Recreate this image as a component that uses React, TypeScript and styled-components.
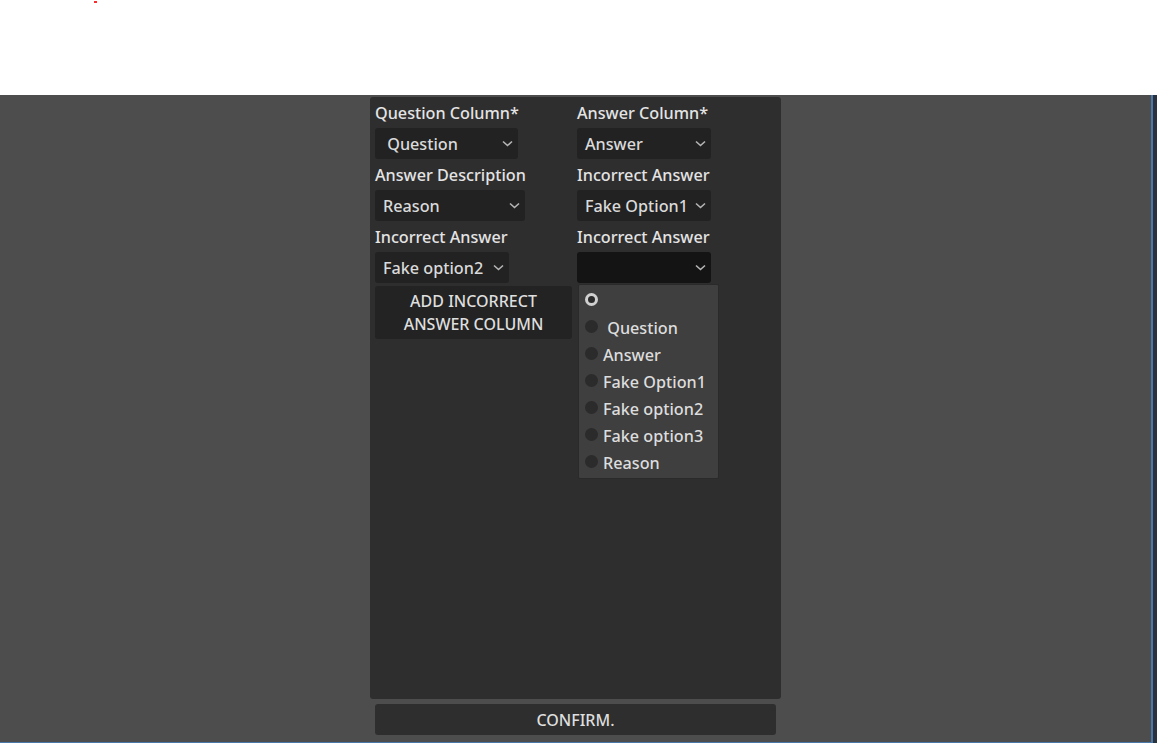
import React from 'react';
import styled, { createGlobalStyle } from 'styled-components';

const GlobalStyle = createGlobalStyle`
    html, body {
        margin: 0;
        padding: 0;
        background: #ffffff;
    }
    body {
        font-family: 'Noto Sans', 'Open Sans', sans-serif;
        width: 1157px;
        height: 743px;
        overflow: hidden;
    }
`;

const Page = styled.div`
    display: flex;
    flex-direction: column;
    width: 1157px;
    height: 743px;
`;

const Header = styled.div`
    position: relative;
    height: 95px;
    flex: none;
    background: #ffffff;
`;

// leftover cursor tick in the header strip
const RedTick = styled.span`
    position: absolute;
    left: 94px;
    top: 1px;
    width: 3px;
    height: 2px;
    background: #ff2a2a;
`;

const Stage = styled.div`
    flex: 1;
    display: flex;
    align-items: flex-start;
    background: #29323e;
`;

const Viewport = styled.div`
    width: 1151px;
    height: 645px;
    background: #4d4d4d;
    border-right: 2px solid #4a78a8;
    border-bottom: 2px solid #4a78a8;
    display: flex;
    flex-direction: column;
    align-items: center;
    padding-top: 2px;
    box-sizing: content-box;
`;

const Panel = styled.div`
    width: 411px;
    height: 602px;
    box-sizing: border-box;
    background: #2e2e2e;
    border-radius: 3px;
    padding: 4px 6px 0 5px;
`;

const Grid = styled.div`
    display: grid;
    grid-template-columns: 197px 197px;
    column-gap: 5px;
    row-gap: 4px;
`;

const Field = styled.div`
    position: relative;
    display: flex;
    flex-direction: column;
    align-items: flex-start;
    gap: 3px;
`;

const Label = styled.div`
    height: 24px;
    line-height: 24px;
    font-size: 16.2px;
    font-weight: 500;
    color: #e4e4e4;
    white-space: nowrap;
`;

const Select = styled.div<{ $w: number; $open?: boolean }>`
    width: ${(p) => p.$w}px;
    height: 31px;
    box-sizing: border-box;
    display: flex;
    align-items: center;
    justify-content: space-between;
    padding: 0 5px 0 8px;
    border-radius: 3px;
    background: ${(p) => (p.$open ? '#141414' : '#222222')};
    font-size: 16.2px;
    font-weight: 500;
    color: #dadada;
    white-space: pre;
`;

const Chevron = () => (
    <svg width="11" height="7" viewBox="0 0 11 7">
        <polyline points="1,1.5 5.5,5.5 10,1.5" fill="none" stroke="#b5b5b5" strokeWidth="1.6" />
    </svg>
);

const AddButton = styled.div`
    height: 53px;
    margin-top: -1px;
    background: #232323;
    border-radius: 3px;
    display: flex;
    align-items: center;
    justify-content: center;
    text-align: center;
    font-size: 16px;
    font-weight: 500;
    line-height: 23px;
    color: #dedede;
`;

const Popup = styled.div`
    position: absolute;
    left: 1px;
    top: 59px;
    width: 141px;
    height: 195px;
    box-sizing: border-box;
    background: #3f3f3f;
    border: 1px solid #2a2a2a;
    border-radius: 2px;
    padding: 2px 0 0 6px;
    z-index: 2;
`;

const Option = styled.div`
    height: 27px;
    display: flex;
    align-items: center;
    gap: 5px;
    font-size: 16.2px;
    font-weight: 500;
    color: #dddddd;
    white-space: pre;
`;

const Radio = styled.span<{ $checked?: boolean }>`
    width: 13px;
    height: 13px;
    box-sizing: border-box;
    border-radius: 50%;
    flex: none;
    margin-top: -2px;
    background: #2b2b2b;
    border: ${(p) => (p.$checked ? '3px solid #d0d0d0' : 'none')};
`;

const Confirm = styled.div`
    width: 401px;
    height: 31px;
    margin-top: 5px;
    background: #2e2e2e;
    border-radius: 3px;
    display: flex;
    align-items: center;
    justify-content: center;
    font-size: 16px;
    font-weight: 500;
    color: #dedede;
`;

const options = ['', ' Question', 'Answer', 'Fake Option1', 'Fake option2', 'Fake option3', 'Reason'];

const fields = [
    { label: 'Question Column*', value: ' Question', width: 143 },
    { label: 'Answer Column*', value: 'Answer', width: 134 },
    { label: 'Answer Description', value: 'Reason', width: 150 },
    { label: 'Incorrect Answer', value: 'Fake Option1', width: 134 },
    { label: 'Incorrect Answer', value: 'Fake option2', width: 134 },
    { label: 'Incorrect Answer', value: '', width: 134, open: true },
];

export default function App() {
    return (
        <Page>
            <GlobalStyle />
            <Header>
                <RedTick />
            </Header>
            <Stage>
                <Viewport>
                    <Panel>
                        <Grid>
                            {fields.map((f, i) => (
                                <Field key={i}>
                                    <Label>{f.label}</Label>
                                    <Select $w={f.width} $open={f.open}>
                                        <span>{f.value}</span>
                                        <Chevron />
                                    </Select>
                                    {f.open && (
                                        <Popup>
                                            {options.map((o, j) => (
                                                <Option key={j}>
                                                    <Radio $checked={j === 0} />
                                                    <span>{o}</span>
                                                </Option>
                                            ))}
                                        </Popup>
                                    )}
                                </Field>
                            ))}
                            <AddButton>
                                ADD INCORRECT
                                <br />
                                ANSWER COLUMN
                            </AddButton>
                        </Grid>
                    </Panel>
                    <Confirm>CONFIRM.</Confirm>
                </Viewport>
            </Stage>
        </Page>
    );
}
